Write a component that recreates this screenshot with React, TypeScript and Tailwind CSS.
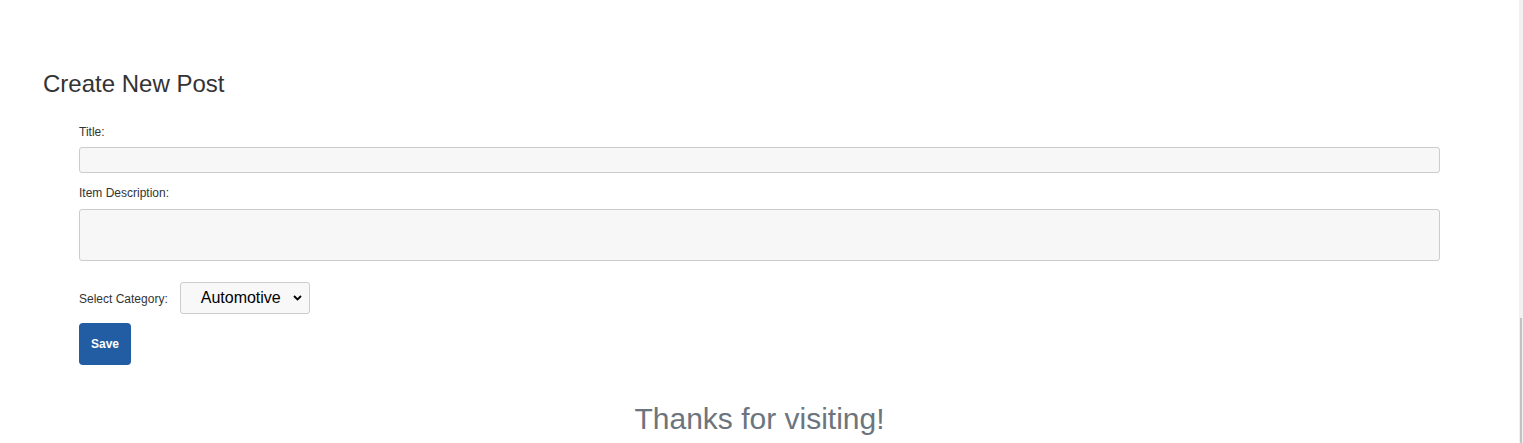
import React from "react";

export default function App() {
  return (
    <div className="flex h-[443px] w-full overflow-hidden bg-white font-['Liberation_Sans',Arial,sans-serif]">
      <main className="flex-1 min-w-0">
        <div className="px-[43px] pt-[70px]">
          <h1 className="text-[24px] leading-[28px] text-[#333333] font-normal">Create New Post</h1>
          <form className="mx-[36px] mt-[27px] flex flex-col">
            <label className="text-[12px] leading-[14px] text-[#333333]">Title:</label>
            <div className="mt-[8px] h-[26px] w-full rounded-[3px] border border-[#cccccc] bg-[#f7f7f7]" />
            <label className="mt-[13px] text-[12px] leading-[14px] text-[#333333]">Item Description:</label>
            <div className="mt-[9px] h-[52px] w-full rounded-[3px] border border-[#cccccc] bg-[#f7f7f7]" />
            <div className="mt-[21px] flex items-center gap-[12px]">
              <span className="pt-[2px] text-[12px] leading-[14px] text-[#333333]">Select Category:</span>
              <div className="flex h-[32px] w-[130px] items-center rounded-[3px] border border-[#cccccc] bg-[#f8f8f8] pl-[20px] pr-[7px]">
                <span className="flex-1 text-[16px] leading-[18px] text-black">Automotive</span>
                <svg width="9" height="6" viewBox="0 0 9 6">
                  <path d="M1 1 L4.5 4.5 L8 1" fill="none" stroke="#000" strokeWidth="1.8" />
                </svg>
              </div>
            </div>
            <div className="mt-[9px]">
              <button
                type="button"
                className="h-[42px] w-[52px] rounded-[4px] bg-[#225ca3] text-[12px] font-bold text-white"
              >
                Save
              </button>
            </div>
          </form>
        </div>
        <p className="mt-[37px] text-center text-[30px] leading-[34px] text-[#6c757d]">Thanks for visiting!</p>
      </main>
      <div className="flex w-[4px] flex-col bg-[#f1f1f1]">
        <div className="h-[318px]" />
        <div className="ml-[1px] w-[2px] flex-1 bg-[#c1c1c1]" />
      </div>
    </div>
  );
}
